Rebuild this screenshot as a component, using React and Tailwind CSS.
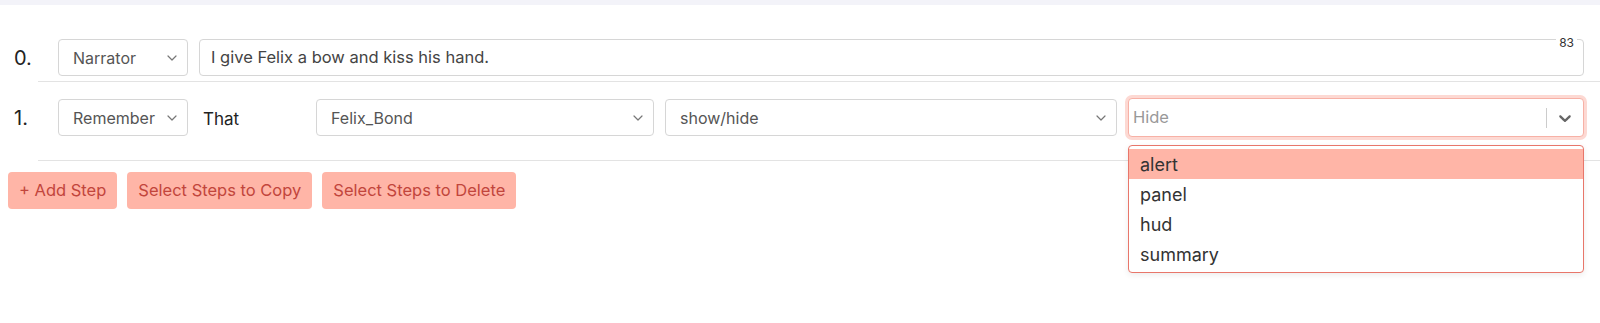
import { useState } from "react";

const font = { fontFamily: "Inter, 'Liberation Sans', sans-serif" };

function Chevron() {
  return (
    <svg width="10" height="6" viewBox="0 0 10 6" className="shrink-0">
      <path d="M1 1l4 4 4-4" fill="none" stroke="#777" strokeWidth="1.2" strokeLinecap="round" strokeLinejoin="round" />
    </svg>
  );
}

function NativeSelect({ value, className = "" }) {
  return (
    <div
      className={`h-[37px] flex items-center justify-between pl-[14px] pr-[10px] border border-[#d6d6d6] rounded-[4px] bg-white text-[16px] text-[#555] ${className}`}
    >
      <span>{value}</span>
      <Chevron />
    </div>
  );
}

const OPTIONS = ["alert", "panel", "hud", "summary"];

function HideSelect() {
  const [active] = useState(0);
  return (
    <div className="relative flex-1">
      <div className="h-[39px] flex items-center border border-[#f7b1a6] rounded-[4px] bg-white shadow-[0_0_0_3px_#fdd9d3]">
        <span className="flex-1 pl-[4px] text-[16.5px] text-[#999]">Hide</span>
        <span className="w-px h-[20px] bg-[#ccc]" />
        <div className="px-[8px] flex items-center">
          <svg width="20" height="20" viewBox="0 0 20 20" fill="#666">
            <path d="M4.516 7.548c0.436-0.446 1.043-0.481 1.576 0l3.908 3.747 3.908-3.747c0.533-0.481 1.141-0.446 1.574 0 0.436 0.445 0.408 1.197 0 1.615-0.406 0.418-4.695 4.502-4.695 4.502-0.217 0.223-0.502 0.335-0.787 0.335s-0.57-0.112-0.789-0.335c0 0-4.287-4.084-4.695-4.502s-0.436-1.17 0-1.615z" />
          </svg>
        </div>
      </div>
      <div className="absolute left-0 right-0 top-[calc(100%+8px)] z-10 bg-white border border-[#e8766a] rounded-[4px] shadow-[0_2px_6px_rgba(0,0,0,0.08)] py-[3px]">
        {OPTIONS.map((o, i) => (
          <div
            key={o}
            className={`px-[11px] h-[30px] flex items-center text-[18px] text-[#333] ${i === active ? "bg-[#ffb5a7]" : ""}`}
          >
            {o}
          </div>
        ))}
      </div>
    </div>
  );
}

export default function App() {
  return (
    <div className="w-[1600px] h-[323px] bg-white overflow-hidden" style={font}>
      <div className="h-[5px] bg-[#f3f3f9]" />

      {/* step 0 */}
      <div className="flex items-center pl-[14px] pr-[16px] pt-[34px] pb-[5px]">
        <span className="w-[44px] text-[20px] text-[#222]">0.</span>
        <NativeSelect value="Narrator" className="w-[130px]" />
        <div className="relative flex-1 ml-[11px] h-[37px] flex items-center px-[11px] border border-[#d6d6d6] rounded-[4px]">
          <span className="text-[16.5px] text-[#444]">I give Felix a bow and kiss his hand.</span>
          <span className="absolute right-[6px] -top-[4px] bg-white px-[3px] text-[12px] leading-[13px] text-[#333]">83</span>
        </div>
      </div>
      <div className="ml-[38px] h-px bg-[#e3e3e3]" />

      {/* step 1 */}
      <div className="flex items-center pl-[14px] pr-[16px] pt-[16px] pb-[23px]">
        <span className="w-[44px] text-[20px] text-[#222]">1.</span>
        <NativeSelect value="Remember" className="w-[130px]" />
        <span className="w-[128px] pl-[15px] pt-[4px] text-[17px] text-[#222]">That</span>
        <NativeSelect value="Felix_Bond" className="w-[338px]" />
        <NativeSelect value="show/hide" className="w-[452px] ml-[11px]" />
        <div className="w-[11px]" />
        <HideSelect />
      </div>
      <div className="ml-[38px] h-px bg-[#e3e3e3]" />

      <div className="flex gap-[10px] pl-[8px] pt-[11px]">
        {["+ Add Step", "Select Steps to Copy", "Select Steps to Delete"].map((t) => (
          <button
            key={t}
            className="h-[37px] px-[11px] rounded-[4px] bg-[#ffb5a7] text-[16.5px] text-[#c2453c]"
          >
            {t}
          </button>
        ))}
      </div>
    </div>
  );
}
